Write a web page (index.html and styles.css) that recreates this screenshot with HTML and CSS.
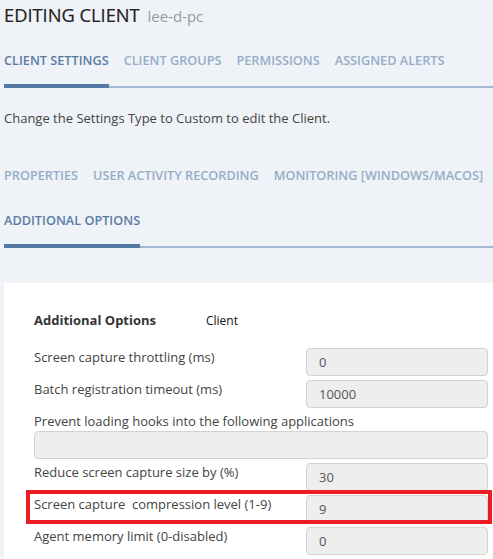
FILE: index.html
```html
<!DOCTYPE html>
<html lang="en">
<head>
<meta charset="utf-8">
<title>Editing Client</title>
<link rel="stylesheet" href="styles.css">
</head>
<body>
<div class="page">
  <h1 class="page-title">EDITING CLIENT <span class="page-subtitle">lee-d-pc</span></h1>

  <nav class="tabs tabs-main">
    <a class="tab active">CLIENT SETTINGS</a>
    <a class="tab">CLIENT GROUPS</a>
    <a class="tab">PERMISSIONS</a>
    <a class="tab">ASSIGNED ALERTS</a>
  </nav>

  <p class="notice">Change the Settings Type to Custom to edit the Client.</p>

  <nav class="tabs tabs-sub">
    <a class="tab">PROPERTIES</a>
    <a class="tab">USER ACTIVITY RECORDING</a>
    <a class="tab">MONITORING [WINDOWS/MACOS]</a>
    <a class="tab active">ADDITIONAL OPTIONS</a>
  </nav>

  <section class="panel">
    <div class="panel-head">
      <h2 class="panel-title">Additional Options</h2>
      <span class="panel-scope">Client</span>
    </div>

    <div class="field">
      <label class="field-label">Screen capture throttling (ms)</label>
      <input class="field-input" type="text" value="0" disabled>
    </div>
    <div class="field">
      <label class="field-label">Batch registration timeout (ms)</label>
      <input class="field-input" type="text" value="10000" disabled>
    </div>
    <div class="field field-stacked">
      <label class="field-label">Prevent loading hooks into the following applications</label>
      <input class="field-input" type="text" value="" disabled>
    </div>
    <div class="field">
      <label class="field-label">Reduce screen capture size by (%)</label>
      <input class="field-input" type="text" value="30" disabled>
    </div>
    <div class="field highlighted">
      <label class="field-label">Screen capture&nbsp; compression level (1-9)</label>
      <input class="field-input" type="text" value="9" disabled>
    </div>
    <div class="field">
      <label class="field-label">Agent memory limit (0-disabled)</label>
      <input class="field-input" type="text" value="0" disabled>
    </div>
  </section>
</div>
</body>
</html>
```
FILE: styles.css
```css
html, body {
  margin: 0;
  padding: 0;
  background: #eff2f7;
  font-family: "Open Sans", "Liberation Sans", sans-serif;
  color: #444;
}

.page {
  padding: 3px 0 0 4px;
}

.page-title {
  margin: 0 0 15px;
  font-size: 18.3px;
  line-height: 24px;
  font-weight: 400;
  color: #222;
  -webkit-text-stroke: 0.2px #222;
}

.page-subtitle {
  font-size: 15px;
  color: #999;
  margin-left: 3px;
  -webkit-text-stroke: 0;
}

/* tab strips: thin rule along the bottom, thick bar under the active tab */
.tabs {
  display: flex;
  flex-wrap: wrap;
  column-gap: 15px;
  background: linear-gradient(#a3b9d2, #a3b9d2) left bottom / 100% 2px no-repeat;
}

.tab {
  display: block;
  padding: 7px 0 14px;
  font-size: 12.7px;
  line-height: 20px;
  font-weight: 600;
  color: #96adc8;
  border-bottom: 4px solid transparent;
  cursor: pointer;
}

.tab.active {
  color: #5a7ca3;
  border-bottom-color: #5479a4;
}

.notice {
  margin: 20px 0 30px;
  font-size: 13px;
  line-height: 20px;
  color: #444;
}

.panel {
  margin-top: 35px;
  background: #fff;
  padding: 27px 5px 20px 30px;
}

.panel-head {
  display: flex;
  align-items: baseline;
  margin-bottom: 18px;
}

.panel-title {
  margin: 0;
  width: 172px;
  font-size: 13px;
  line-height: 20px;
  font-weight: 700;
  color: #333;
}

.panel-scope {
  font-size: 12px;
  color: #111;
}

.field {
  display: flex;
  align-items: flex-start;
  margin-bottom: 4px;
  position: relative;
}

.field-label {
  flex: 0 0 272px;
  font-size: 13px;
  line-height: 19px;
  color: #444;
}

.field-input {
  flex: 1 1 auto;
  min-width: 0;
  box-sizing: border-box;
  height: 28px;
  margin: 0;
  padding: 0 12px;
  border: 1px solid #d2d2d2;
  border-radius: 4px;
  background: #eee;
  font-family: inherit;
  font-size: 13px;
  color: #555;
}

.field-stacked {
  flex-direction: column;
  align-items: stretch;
}

.field-stacked .field-label {
  flex: none;
  line-height: 19px;
}

.field-stacked .field-input {
  flex: none;
  width: 100%;
}

/* red call-out frame drawn over one row */
.highlighted::after {
  content: "";
  position: absolute;
  top: -5px;
  bottom: -1px;
  left: -8px;
  right: -4px;
  border: 4px solid #ec1c24;
  pointer-events: none;
}
```
